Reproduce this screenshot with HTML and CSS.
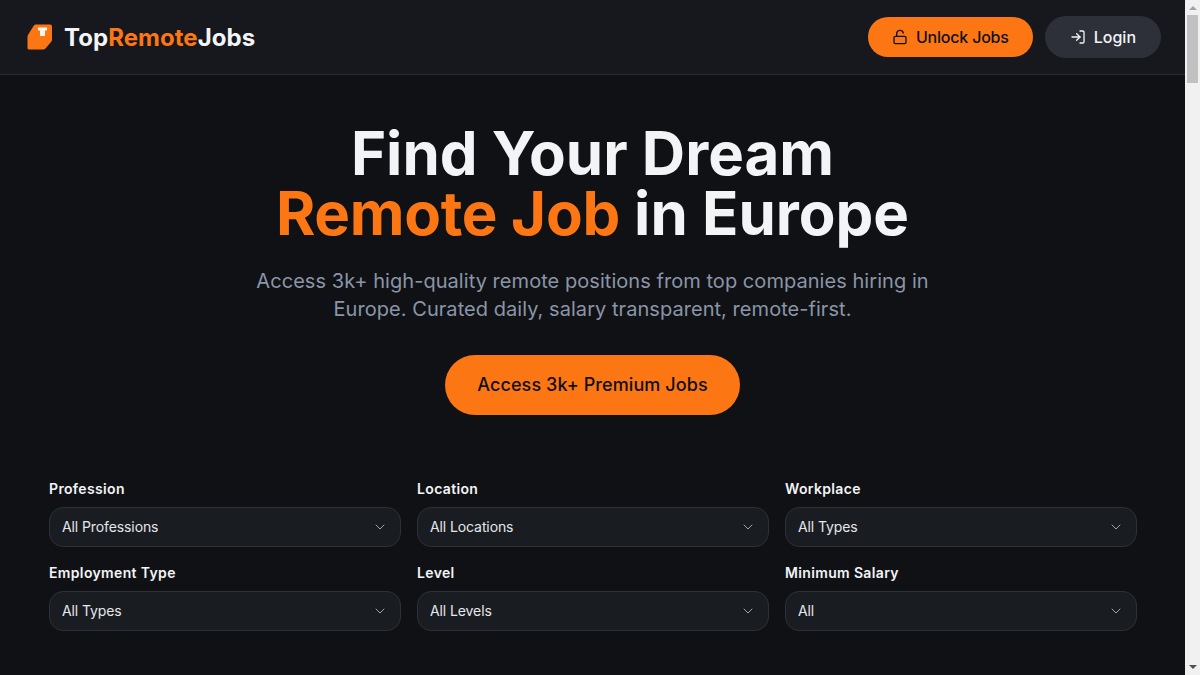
FILE: index.html
```html
<!DOCTYPE html>
<html lang="en">
<head>
<meta charset="UTF-8">
<meta name="viewport" content="width=device-width, initial-scale=1.0">
<title>TopRemoteJobs</title>
<link rel="stylesheet" href="styles.css">
</head>
<body>

<div class="app">
  <header class="topbar">
    <a class="brand" href="#">
      <svg class="brand-icon" width="26" height="26" viewBox="0 0 26 26">
        <path d="M8.5 .5 H23 Q25 .5 25 2.5 V15.5 Q25 17 24 18 L18.5 24.5 Q17.5 25.5 16 25.5 H2 Q.5 25.5 .5 24 V13 Q.5 12 1 11 L6.5 2 Q7.5 .5 8.5 .5 Z" fill="#fd7614"/>
        <path d="M11 3.5 H20 V6.5 H18 V12 H13 V6.5 H11 Z" fill="#f8f4ef"/>
      </svg>
      <span class="brand-name">Top<span class="accent">Remote</span>Jobs</span>
    </a>
    <nav class="topbar-actions">
      <a class="btn btn-unlock" href="#">
        <svg width="16" height="16" viewBox="0 0 24 24" fill="none" stroke="currentColor" stroke-width="2" stroke-linecap="round" stroke-linejoin="round"><rect x="3" y="11" width="18" height="11" rx="2"/><path d="M7 11V7a5 5 0 0 1 9.9-1"/></svg>
        Unlock Jobs
      </a>
      <a class="btn btn-login" href="#">
        <svg width="16" height="16" viewBox="0 0 24 24" fill="none" stroke="currentColor" stroke-width="2" stroke-linecap="round" stroke-linejoin="round"><path d="M15 3h4a2 2 0 0 1 2 2v14a2 2 0 0 1-2 2h-4"/><path d="M10 17l5-5-5-5"/><path d="M15 12H3"/></svg>
        Login
      </a>
    </nav>
  </header>

  <main class="page">
    <section class="hero">
      <h1>Find Your Dream<br><span class="accent">Remote Job</span> in Europe</h1>
      <p>Access 3k+ high-quality remote positions from top companies hiring in Europe. Curated daily, salary transparent, remote-first.</p>
      <a class="cta" href="#">Access 3k+ Premium Jobs</a>
    </section>

    <section class="filters">
      <div class="filter">
        <label for="profession">Profession</label>
        <div class="select-wrap">
          <select id="profession"><option>All Professions</option></select>
          <svg class="chevron" width="16" height="16" viewBox="0 0 24 24" fill="none" stroke="currentColor" stroke-width="2" stroke-linecap="round" stroke-linejoin="round"><path d="M6 9l6 6 6-6"/></svg>
        </div>
      </div>
      <div class="filter">
        <label for="location">Location</label>
        <div class="select-wrap">
          <select id="location"><option>All Locations</option></select>
          <svg class="chevron" width="16" height="16" viewBox="0 0 24 24" fill="none" stroke="currentColor" stroke-width="2" stroke-linecap="round" stroke-linejoin="round"><path d="M6 9l6 6 6-6"/></svg>
        </div>
      </div>
      <div class="filter">
        <label for="workplace">Workplace</label>
        <div class="select-wrap">
          <select id="workplace"><option>All Types</option></select>
          <svg class="chevron" width="16" height="16" viewBox="0 0 24 24" fill="none" stroke="currentColor" stroke-width="2" stroke-linecap="round" stroke-linejoin="round"><path d="M6 9l6 6 6-6"/></svg>
        </div>
      </div>
      <div class="filter">
        <label for="employment">Employment Type</label>
        <div class="select-wrap">
          <select id="employment"><option>All Types</option></select>
          <svg class="chevron" width="16" height="16" viewBox="0 0 24 24" fill="none" stroke="currentColor" stroke-width="2" stroke-linecap="round" stroke-linejoin="round"><path d="M6 9l6 6 6-6"/></svg>
        </div>
      </div>
      <div class="filter">
        <label for="level">Level</label>
        <div class="select-wrap">
          <select id="level"><option>All Levels</option></select>
          <svg class="chevron" width="16" height="16" viewBox="0 0 24 24" fill="none" stroke="currentColor" stroke-width="2" stroke-linecap="round" stroke-linejoin="round"><path d="M6 9l6 6 6-6"/></svg>
        </div>
      </div>
      <div class="filter">
        <label for="salary">Minimum Salary</label>
        <div class="select-wrap">
          <select id="salary"><option>All</option></select>
          <svg class="chevron" width="16" height="16" viewBox="0 0 24 24" fill="none" stroke="currentColor" stroke-width="2" stroke-linecap="round" stroke-linejoin="round"><path d="M6 9l6 6 6-6"/></svg>
        </div>
      </div>
    </section>
  </main>
</div>

<div class="scrollbar">
  <div class="scroll-arrow scroll-up"></div>
  <div class="scroll-track"><div class="scroll-thumb"></div></div>
  <div class="scroll-arrow scroll-down"></div>
</div>

</body>
</html>
```

FILE: styles.css
```css
* {
  box-sizing: border-box;
}
html, body {
  height: 100%;
}
body {
  display: flex;
  margin: 0;
  overflow: hidden;
  font-family: Inter, "Liberation Sans", sans-serif;
  background-color: #0f1115;
  color: #f3f4f6;
}
a {
  text-decoration: none;
  color: inherit;
}
.accent {
  color: #fd7614;
}
.app {
  flex: 1;
  min-width: 0;
}

.topbar {
  display: flex;
  justify-content: space-between;
  align-items: center;
  height: 75px;
  padding: 0 24px 0 27px;
  background-color: #16181d;
  border-bottom: 1px solid #2a2d33;
}
.brand {
  display: flex;
  align-items: center;
  gap: 11px;
}
.brand-name {
  font-size: 24px;
  font-weight: 700;
  letter-spacing: 0.05px;
}
.topbar-actions {
  display: flex;
  align-items: center;
  gap: 12px;
}
.btn {
  display: flex;
  align-items: center;
  gap: 8px;
  font-size: 16px;
  font-weight: 500;
  border-radius: 999px;
}
.btn-unlock {
  height: 40px;
  padding: 0 24px;
  background-color: #fd7614;
  color: #0f1115;
  letter-spacing: -0.2px;
}
.btn-login {
  height: 42px;
  padding: 0 25px;
  background-color: #2d3038;
  color: #f3f4f6;
}

.hero {
  display: flex;
  flex-direction: column;
  align-items: center;
  padding-top: 48px;
  text-align: center;
}
.hero h1 {
  margin: 0;
  font-size: 60px;
  line-height: 60px;
  font-weight: 700;
}
.hero h1 .accent {
  letter-spacing: -0.3px;
}
.hero p {
  margin: 24px 0 0;
  width: 680px;
  font-size: 20px;
  line-height: 28px;
  letter-spacing: 0.05px;
  color: #8b95a7;
}
.cta {
  margin-top: 32px;
  padding: 0 32px 1px;
  height: 60px;
  display: flex;
  align-items: center;
  font-size: 18px;
  font-weight: 500;
  letter-spacing: 0.09px;
  border-radius: 999px;
  background-color: #fd7614;
  color: #0f1115;
}

.filters {
  display: grid;
  grid-template-columns: repeat(3, 1fr);
  gap: 16px;
  margin: 64px 48px 0 49px;
}
.filter label {
  display: block;
  margin-bottom: 8px;
  font-size: 14px;
  line-height: 20px;
  font-weight: 600;
  letter-spacing: 0.35px;
}
.select-wrap {
  position: relative;
}
.select-wrap select {
  display: block;
  width: 100%;
  height: 40px;
  padding: 0 12px 2px;
  font-family: inherit;
  font-size: 14px;
  letter-spacing: -0.1px;
  color: #e5e7eb;
  background-color: #191c21;
  border: 1px solid #2d3036;
  border-radius: 14px;
  appearance: none;
}
.chevron {
  position: absolute;
  top: 12px;
  right: 13px;
  color: #9ca3af;
  stroke-width: 1.5;
}

.scrollbar {
  display: flex;
  flex-direction: column;
  flex: none;
  width: 15px;
  background-color: #f1f1f1;
}
.scroll-arrow {
  flex: none;
  display: flex;
  justify-content: center;
  height: 15px;
}
.scroll-arrow::before {
  content: "";
  margin-top: 6px;
  height: 0;
  border-left: 4px solid transparent;
  border-right: 4px solid transparent;
}
.scroll-up::before {
  border-bottom: 4px solid #a3a3a3;
}
.scroll-down::before {
  margin-top: 5px;
  border-top: 4px solid #505050;
}
.scroll-track {
  flex: 1;
}
.scroll-thumb {
  height: 68px;
  margin: 0 2px;
  background-color: #c1c1c1;
}
```
